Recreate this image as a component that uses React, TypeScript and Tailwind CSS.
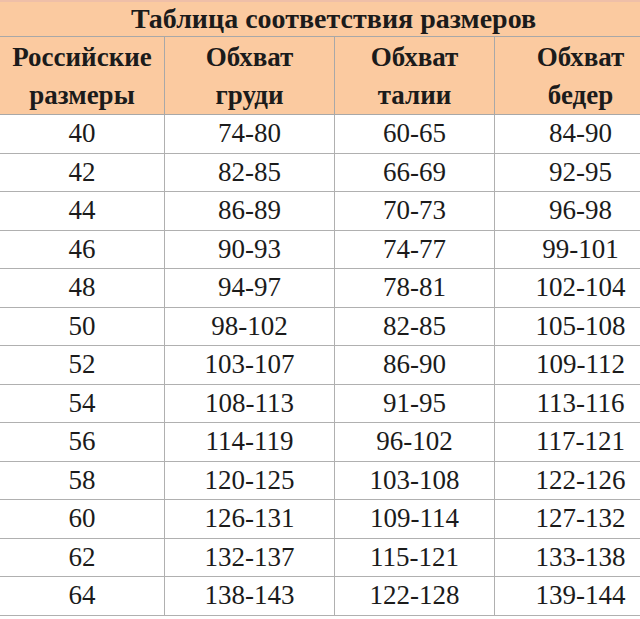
import React, { useEffect, useState } from 'react';

const rows: string[][] = [
  ['40', '74-80', '60-65', '84-90'],
  ['42', '82-85', '66-69', '92-95'],
  ['44', '86-89', '70-73', '96-98'],
  ['46', '90-93', '74-77', '99-101'],
  ['48', '94-97', '78-81', '102-104'],
  ['50', '98-102', '82-85', '105-108'],
  ['52', '103-107', '86-90', '109-112'],
  ['54', '108-113', '91-95', '113-116'],
  ['56', '114-119', '96-102', '117-121'],
  ['58', '120-125', '103-108', '122-126'],
  ['60', '126-131', '109-114', '127-132'],
  ['62', '132-137', '115-121', '133-138'],
  ['64', '138-143', '122-128', '139-144'],
];

const headers = [
  ['Российские', 'размеры'],
  ['Обхват', 'груди'],
  ['Обхват', 'талии'],
  ['Обхват', 'бедер'],
];

export default function App() {
  // re-render once the serif faces are ready so the table picks them up
  const [ready, setReady] = useState(0);
  useEffect(() => {
    const f = document.fonts;
    if (!f) return;
    Promise.all([
      f.load('27px "Liberation Serif"', 'Таблица 0123456789-'),
      f.load('bold 27px "Liberation Serif"', 'Таблица 0123456789-'),
    ]).then(() => setReady(1)).catch(() => setReady(1));
  }, []);

  return (
    <div key={ready} className="font-['Liberation_Serif',serif] w-[640px] h-[619px] overflow-hidden bg-white">
      <div className="w-[667px] grid grid-cols-[165px_170px_160px_172px] text-[#1b1b1b]">
        <div className="font-['Liberation_Serif',serif] col-span-4 h-[37px] bg-[#fbcaa0] border-t-2 border-t-[#efbfa8] border-b border-[#a8a8a8] flex items-center justify-center font-bold text-[28px] leading-none">
          Таблица соответствия размеров
        </div>
        {headers.map((h, i) => (
          <div
            key={i}
            className="font-['Liberation_Serif',serif] h-[78px] bg-[#fbcaa0] border-r border-b border-[#a8a8a8] flex flex-col items-center justify-center font-bold text-[27px] leading-[38px]"
          >
            <span>{h[0]}</span>
            <span>{h[1]}</span>
          </div>
        ))}
        {rows.map((r, ri) =>
          r.map((c, ci) => (
            <div
              key={ri + '-' + ci}
              className="font-['Liberation_Serif',serif] h-[38.5px] border-r border-b border-[#b0b0b0] flex items-center justify-center text-[27px] leading-none"
            >
              {c}
            </div>
          ))
        )}
      </div>
    </div>
  );
}
